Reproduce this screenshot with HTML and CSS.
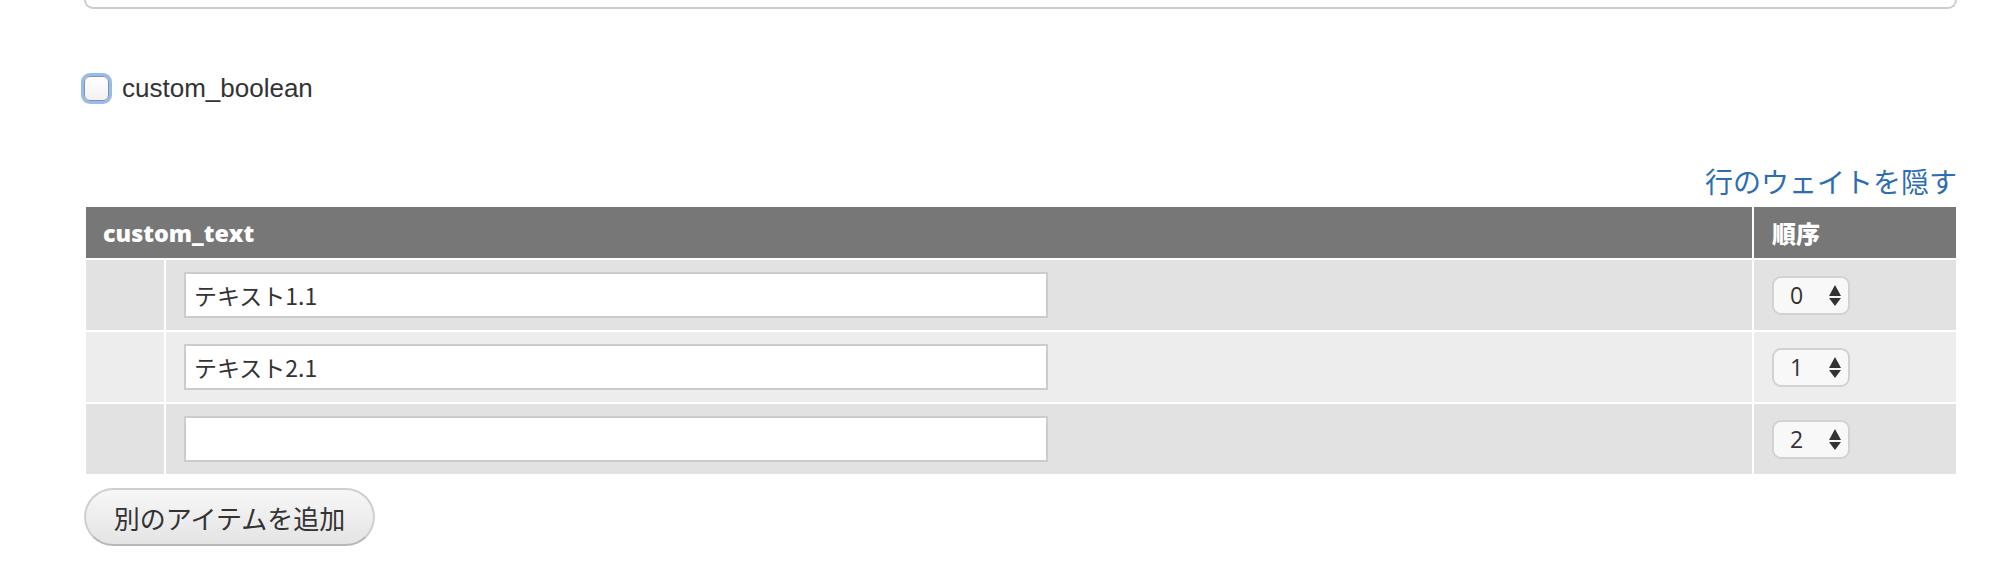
FILE: index.html
```html
<!DOCTYPE html>
<html lang="ja">
<head>
<meta charset="utf-8">
<title>custom fields</title>
<link rel="stylesheet" href="styles.css">
</head>
<body>
<div class="page">
  <div class="top-box"></div>

  <div class="check-row">
    <input type="checkbox" class="cb" id="custom-boolean">
    <label class="cb-label" for="custom-boolean">custom_boolean</label>
  </div>

  <div class="weights-row">
    <a class="weights-link" href="#">行のウェイトを隠す</a>
  </div>

  <table class="items">
    <colgroup>
      <col class="col-handle">
      <col class="col-text">
      <col class="col-weight">
    </colgroup>
    <thead>
      <tr>
        <th class="th-text" colspan="2">custom_text</th>
        <th class="th-weight">順序</th>
      </tr>
    </thead>
    <tbody>
      <tr class="odd">
        <td class="cell-handle"></td>
        <td class="cell-text"><input class="text-input" type="text" value="テキスト1.1"></td>
        <td class="cell-weight">
          <span class="weight-select">
            <select class="weight"><option selected>0</option><option>1</option><option>2</option></select>
            <svg class="arrows" width="12" height="21" viewBox="0 0 12 21"><path d="M6 0 L12 11 L0 11 Z M0 13 L12 13 L6 21 Z" fill="#333"/></svg>
          </span>
        </td>
      </tr>
      <tr class="even">
        <td class="cell-handle"></td>
        <td class="cell-text"><input class="text-input" type="text" value="テキスト2.1"></td>
        <td class="cell-weight">
          <span class="weight-select">
            <select class="weight"><option>0</option><option selected>1</option><option>2</option></select>
            <svg class="arrows" width="12" height="21" viewBox="0 0 12 21"><path d="M6 0 L12 11 L0 11 Z M0 13 L12 13 L6 21 Z" fill="#333"/></svg>
          </span>
        </td>
      </tr>
      <tr class="odd">
        <td class="cell-handle"></td>
        <td class="cell-text"><input class="text-input" type="text" value=""></td>
        <td class="cell-weight">
          <span class="weight-select">
            <select class="weight"><option>0</option><option>1</option><option selected>2</option></select>
            <svg class="arrows" width="12" height="21" viewBox="0 0 12 21"><path d="M6 0 L12 11 L0 11 Z M0 13 L12 13 L6 21 Z" fill="#333"/></svg>
          </span>
        </td>
      </tr>
    </tbody>
  </table>

  <button class="add-btn" type="button">別のアイテムを追加</button>
</div>
</body>
</html>
```

FILE: styles.css
```css
html, body {
  margin: 0;
  padding: 0;
  background: #fff;
}

body {
  font-family: "Liberation Sans", "Noto Sans CJK JP", sans-serif;
  color: #333;
}

.page {
  padding: 0 57px 0 84px;
}

.top-box {
  height: 7px;
  border: 2px solid #cccccc;
  border-top: none;
  border-radius: 0 0 9px 9px;
}

.check-row {
  display: flex;
  align-items: center;
  height: 30px;
  margin-top: 64px;
}

.cb {
  appearance: none;
  -webkit-appearance: none;
  box-sizing: border-box;
  width: 25px;
  height: 25px;
  margin: 0;
  border: 1px solid #8f8f8f;
  border-radius: 6px;
  background: linear-gradient(#ffffff, #f1f1f1);
  box-shadow: 0 0 0 3px #93bcf3;
}

.cb-label {
  margin-left: 13px;
  font-family: "Liberation Sans", sans-serif;
  font-size: 26px;
  line-height: 30px;
  color: #333;
}

.weights-row {
  display: flex;
  justify-content: flex-end;
  height: 36px;
  margin-top: 60px;
  margin-bottom: 8px;
}

.weights-link {
  font-family: "Noto Sans CJK JP", sans-serif;
  font-size: 28px;
  line-height: 36px;
  color: #2d6db3;
  text-decoration: none;
}

.items {
  width: 1870px;
  margin-left: 2px;
  table-layout: fixed;
  border-collapse: separate;
  border-spacing: 0;
}

.col-handle { width: 80px; }
.col-text { width: 1588px; }
.col-weight { width: 202px; }

.items th,
.items td {
  box-sizing: border-box;
  padding: 0;
}

.items th {
  height: 51px;
  background: #777777;
  color: #fff;
  font-family: "Open Sans", "Noto Sans CJK JP", sans-serif;
  font-weight: 800;
  font-size: 23.3px;
  text-align: left;
  vertical-align: middle;
}

.th-text {
  padding-left: 17px !important;
  border-right: 2px solid #fff;
}

.th-weight {
  padding-left: 18px !important;
  font-family: "Noto Sans CJK JP", sans-serif !important;
  font-weight: 900 !important;
  font-size: 24px !important;
}

.items td {
  height: 72px;
  border-top: 2px solid #fff;
  vertical-align: middle;
}

.items tr.odd td { background: #e2e2e2; }
.items tr.even td { background: #ededed; }

.cell-handle {
  border-right: 2px solid #fff;
}

.cell-text {
  padding-left: 18px !important;
  border-right: 2px solid #fff;
}

.text-input {
  display: block;
  box-sizing: border-box;
  width: 864px;
  height: 46px;
  margin: 0;
  padding: 0 8px;
  border: 2px solid #cccccc;
  border-radius: 0;
  background: #fff;
  font-family: "Noto Sans CJK JP", sans-serif;
  font-size: 23px;
  color: #333;
  outline: none;
}

.cell-weight {
  padding-left: 18px !important;
}

.weight-select {
  position: relative;
  display: block;
  width: 78px;
  height: 39px;
}

.weight {
  appearance: none;
  -webkit-appearance: none;
  box-sizing: border-box;
  width: 78px;
  height: 39px;
  margin: 0;
  padding: 0 0 0 16px;
  border: 2px solid #d2d2d2;
  border-radius: 9px;
  background: #f8f8f8;
  font-family: "Open Sans", sans-serif;
  font-size: 23px;
  color: #333;
  outline: none;
}

.arrows {
  position: absolute;
  left: 57px;
  top: 9px;
  pointer-events: none;
}

.add-btn {
  display: block;
  box-sizing: border-box;
  width: 291px;
  height: 58px;
  margin-top: 14px;
  padding: 0;
  border: 2px solid #cfcfcf;
  border-bottom-color: #b8b8b8;
  border-radius: 29px;
  background: linear-gradient(#f7f7f7, #e4e4e4);
  font-family: "Noto Sans CJK JP", sans-serif;
  font-size: 26px;
  letter-spacing: 0;
  text-align: center;
  white-space: nowrap;
  color: #333;
  cursor: pointer;
}
```
